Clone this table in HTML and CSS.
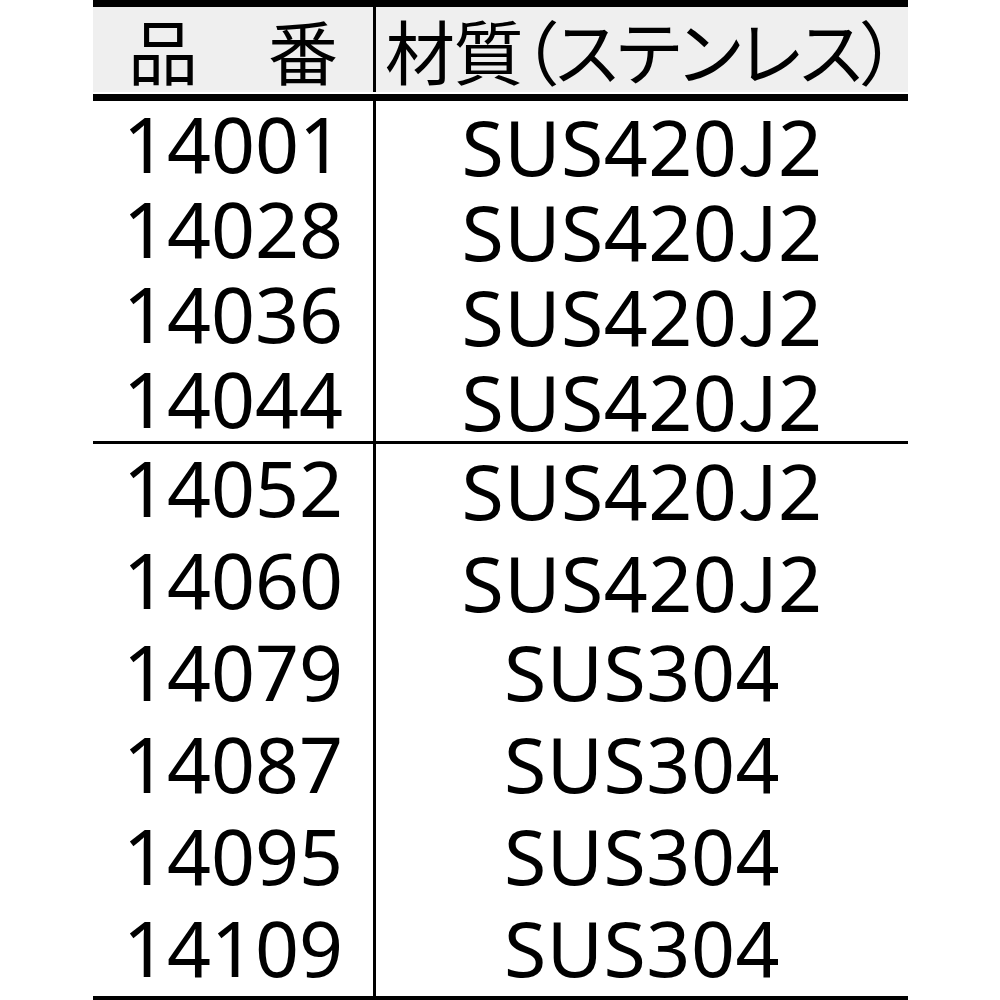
FILE: index.html
```html
<!DOCTYPE html>
<html lang="ja">
<head>
<meta charset="utf-8">
<link rel="stylesheet" href="styles.css">
</head>
<body>
<div class="sheet">
  <div class="head">
    <div class="cell c1 hcell">品　番</div>
    <div class="cell c2 hcell mat">材質（ステンレス）</div>
  </div>
  <div class="group g1">
    <div class="row"><div class="cell c1">14001</div><div class="cell c2">SUS420<span class="jl">J</span>2</div></div>
    <div class="row"><div class="cell c1">14028</div><div class="cell c2">SUS420<span class="jl">J</span>2</div></div>
    <div class="row"><div class="cell c1">14036</div><div class="cell c2">SUS420<span class="jl">J</span>2</div></div>
    <div class="row"><div class="cell c1">14044</div><div class="cell c2">SUS420<span class="jl">J</span>2</div></div>
  </div>
  <div class="group g2">
    <div class="row"><div class="cell c1">14052</div><div class="cell c2">SUS420<span class="jl">J</span>2</div></div>
    <div class="row"><div class="cell c1">14060</div><div class="cell c2">SUS420<span class="jl">J</span>2</div></div>
    <div class="row"><div class="cell c1">14079</div><div class="cell c2">SUS304</div></div>
    <div class="row"><div class="cell c1">14087</div><div class="cell c2">SUS304</div></div>
    <div class="row"><div class="cell c1">14095</div><div class="cell c2">SUS304</div></div>
    <div class="row"><div class="cell c1">14109</div><div class="cell c2">SUS304</div></div>
  </div>
</div>
</body>
</html>
```
FILE: styles.css
```css
html, body {
  margin: 0;
  padding: 0;
  background: #fff;
}
body {
  font-family: "Noto Sans", "Noto Sans CJK JP", sans-serif;
  color: #000;
}
.sheet {
  margin-left: 93px;
  width: 815px;
  border-top: 7px solid #000;
}
.head {
  display: grid;
  grid-template-columns: 283px 532px;
  padding-bottom: 2px;
  border-bottom: 7px solid #000;
  background: #fff;
}
.cell {
  text-align: center;
  white-space: nowrap;
}
.c1 {
  border-right: 3px solid #000;
}
.hcell {
  height: 85px;
  line-height: 85px;
  background: #efefef;
  font-size: 70px;
  font-family: "Noto Sans CJK JP", sans-serif;
  font-feature-settings: "palt";
}
.hcell.mat {
  text-align: left;
  padding-left: 9px;
  letter-spacing: -1.5px;
}
.row {
  display: grid;
  grid-template-columns: 283px 532px;
}
.row .cell {
  font-size: 77px;
}
.row .c2 {
  letter-spacing: 0.5px;
}
.jl {
  font-family: "Noto Sans CJK JP", sans-serif;
  font-size: 75px;
  font-weight: 400;
}
.g1 .row .cell {
  height: 85px;
  line-height: 85px;
}
.g1 {
  border-bottom: 3px solid #000;
}
.g2 .row .cell {
  height: 92px;
  line-height: 88px;
}
.g2 {
  border-bottom: 4px solid #000;
}
```
